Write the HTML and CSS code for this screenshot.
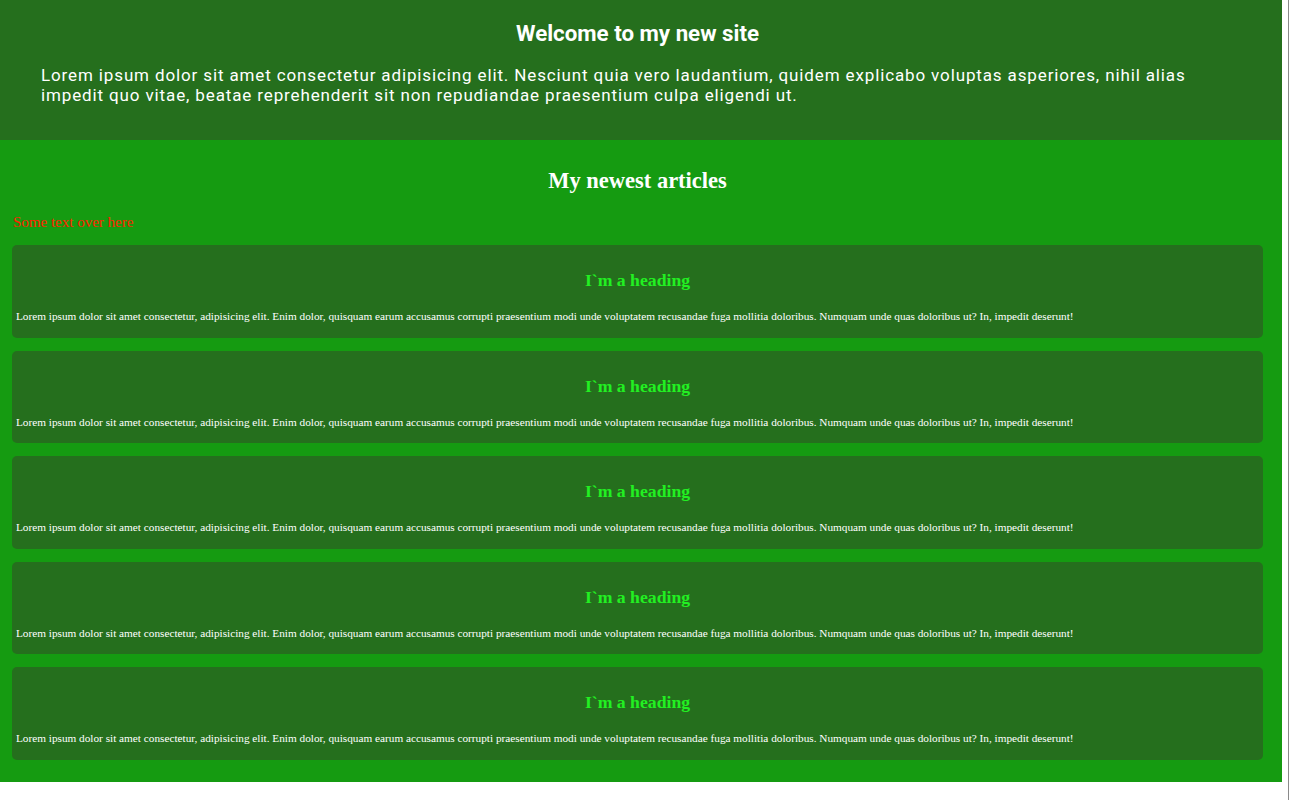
FILE: index.html
```html
<!DOCTYPE html>
<html lang="en">
<head>
<meta charset="utf-8">
<title>Welcome</title>
<link rel="stylesheet" href="styles.css">
</head>
<body>
<div class="page">
  <header class="hero">
    <h1 class="hero-title">Welcome to my new site</h1>
    <p class="hero-text">Lorem ipsum dolor sit amet consectetur adipisicing elit. Nesciunt quia vero laudantium, quidem explicabo voluptas asperiores, nihil alias impedit quo vitae, beatae reprehenderit sit non repudiandae praesentium culpa eligendi ut.</p>
  </header>
  <main class="articles">
    <h2 class="articles-title">My newest articles</h2>
    <p class="note">Some text over here</p>
    <div class="cards">
      <article class="card">
        <h3 class="card-title">I`m a heading</h3>
        <p class="card-text">Lorem ipsum dolor sit amet consectetur, adipisicing elit. Enim dolor, quisquam earum accusamus corrupti praesentium modi unde voluptatem recusandae fuga mollitia doloribus. Numquam unde quas doloribus ut? In, impedit deserunt!</p>
      </article>
      <article class="card">
        <h3 class="card-title">I`m a heading</h3>
        <p class="card-text">Lorem ipsum dolor sit amet consectetur, adipisicing elit. Enim dolor, quisquam earum accusamus corrupti praesentium modi unde voluptatem recusandae fuga mollitia doloribus. Numquam unde quas doloribus ut? In, impedit deserunt!</p>
      </article>
      <article class="card">
        <h3 class="card-title">I`m a heading</h3>
        <p class="card-text">Lorem ipsum dolor sit amet consectetur, adipisicing elit. Enim dolor, quisquam earum accusamus corrupti praesentium modi unde voluptatem recusandae fuga mollitia doloribus. Numquam unde quas doloribus ut? In, impedit deserunt!</p>
      </article>
      <article class="card">
        <h3 class="card-title">I`m a heading</h3>
        <p class="card-text">Lorem ipsum dolor sit amet consectetur, adipisicing elit. Enim dolor, quisquam earum accusamus corrupti praesentium modi unde voluptatem recusandae fuga mollitia doloribus. Numquam unde quas doloribus ut? In, impedit deserunt!</p>
      </article>
      <article class="card">
        <h3 class="card-title">I`m a heading</h3>
        <p class="card-text">Lorem ipsum dolor sit amet consectetur, adipisicing elit. Enim dolor, quisquam earum accusamus corrupti praesentium modi unde voluptatem recusandae fuga mollitia doloribus. Numquam unde quas doloribus ut? In, impedit deserunt!</p>
      </article>
    </div>
  </main>
</div>
</body>
</html>
```

FILE: styles.css
```css
html {
  background: linear-gradient(to left, #8a8a8a 1px, #ffffff 1px);
  min-height: 100%;
}

body {
  margin: 0;
  font-family: "Liberation Serif", "Times New Roman", serif;
}

.page {
  width: 1282px;
}

.hero {
  background: #256f1d;
  color: #ffffff;
  padding: 20px 41px 35px 41px;
  font-family: Roboto, "Liberation Sans", sans-serif;
}

.hero-title {
  margin: 0 -22px 19px -29px;
  font-size: 22.3px;
  line-height: 26px;
  font-weight: 700;
  text-align: center;
}

.hero-text {
  margin: 0;
  font-size: 17px;
  line-height: 20px;
  letter-spacing: 0.87px;
}

.articles {
  background: #159b11;
  padding: 8px 19px 22px 12px;
}

.articles-title {
  margin: 20px 0;
  font-size: 22.5px;
  font-weight: 700;
  text-align: center;
  color: #ffffff;
}

.note {
  margin: 0 0 14px 1px;
  font-size: 15px;
  color: #ff2200;
}

.cards {
  display: flex;
  flex-direction: column;
  gap: 13px;
}

.card {
  background: #256f1d;
  border-radius: 5px;
  padding: 6px 4px 5px;
}

.card-title {
  margin: 19px 0;
  font-size: 17.7px;
  font-weight: 700;
  text-align: center;
  color: #22f022;
}

.card-text {
  margin: 0 0 10.5px;
  font-size: 11.25px;
  color: #ffffff;
}
```
